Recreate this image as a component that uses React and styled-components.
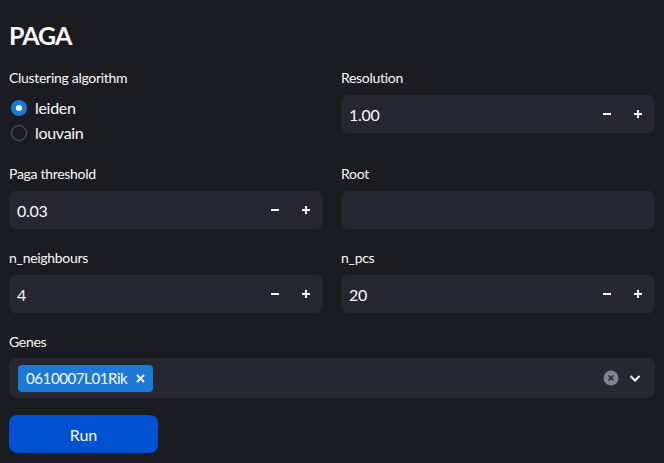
import React from 'react';
import styled, { createGlobalStyle } from 'styled-components';

const GlobalStyle = createGlobalStyle`
  html, body {
    margin: 0;
    padding: 0;
    background: #1b1c21;
  }
  body {
    font-family: 'Lato', 'Noto Sans', sans-serif;
    color: #fafafa;
  }
`;

const Page = styled.div`
  width: 664px;
  height: 463px;
  box-sizing: border-box;
  padding: 0 9px;
  background: #1b1c21;
  overflow: hidden;
`;

const Title = styled.h2`
  margin: 0;
  padding-top: 18px;
  height: 68px;
  box-sizing: border-box;
  font-size: 25px;
  font-weight: 700;
  letter-spacing: -1px;
  line-height: 34px;
  color: #fafafa;
`;

const Grid = styled.div`
  display: grid;
  grid-template-columns: minmax(0, 1fr) minmax(0, 1fr);
  column-gap: 18px;
  row-gap: 19px;
`;

const Field = styled.div`
  display: flex;
  flex-direction: column;
  min-width: 0;
  grid-column: ${p => (p.$wide ? '1 / -1' : 'auto')};
`;

const Label = styled.label`
  font-size: 14px;
  letter-spacing: -0.3px;
  line-height: 20px;
  height: 20px;
  margin-bottom: ${p => p.$gap || 7}px;
  color: #fafafa;
`;

const RadioGroup = styled.div`
  display: flex;
  flex-direction: column;
`;

const RadioRow = styled.div`
  display: flex;
  align-items: center;
  height: 25px;
  gap: 8px;
  padding-left: 2px;
  font-size: 16px;
  letter-spacing: -0.3px;
  color: #fafafa;
`;

const RadioDot = styled.span`
  position: relative;
  width: 16px;
  height: 16px;
  box-sizing: border-box;
  border-radius: 50%;
  flex-shrink: 0;
  background: ${p => (p.$on ? '#1c7ad6' : 'transparent')};
  border: ${p => (p.$on ? 'none' : '1.5px solid #5e606a')};
  &::after {
    content: '';
    display: ${p => (p.$on ? 'block' : 'none')};
    position: absolute;
    left: 50%;
    top: 50%;
    width: 6px;
    height: 6px;
    margin: -3px 0 0 -3px;
    border-radius: 50%;
    background: #fff;
  }
`;

const InputBox = styled.div`
  height: ${p => p.$h || 38}px;
  background: #262730;
  border-radius: 8px;
  display: flex;
  align-items: center;
  padding-left: ${p => p.$pl || 8}px;
  padding-right: ${p => p.$pr || 2}px;
  box-sizing: border-box;
  font-size: 16px;
  letter-spacing: -0.3px;
  color: #fafafa;
`;

const Value = styled.span`
  flex: 1;
`;

const StepBtn = styled.span`
  width: 31px;
  height: 100%;
  display: flex;
  align-items: center;
  justify-content: center;
`;

const Tag = styled.span`
  display: inline-flex;
  align-items: center;
  height: 27px;
  padding: 0 8px;
  gap: 9px;
  background: #1c7ad6;
  border-radius: 4px;
  font-size: 15px;
  letter-spacing: -0.4px;
  color: #fafafa;
`;

const Spacer = styled.span`
  flex: 1;
`;

const IconSlot = styled.span`
  width: 24px;
  display: flex;
  align-items: center;
  justify-content: center;
`;

const RunButton = styled.button`
  display: block;
  margin-top: 17px;
  width: 149px;
  height: 38px;
  border: none;
  border-radius: 8px;
  background: #0051d0;
  color: #fafafa;
  font-family: inherit;
  font-size: 16px;
`;

const Minus = () => (
  <svg width="10" height="10" viewBox="0 0 10 10">
    <path d="M1 5h8" stroke="#fafafa" strokeWidth="2" />
  </svg>
);

const Plus = () => (
  <svg width="10" height="10" viewBox="0 0 10 10">
    <path d="M1 5h8M5 1v8" stroke="#fafafa" strokeWidth="2" />
  </svg>
);

const NumberInput = ({ value }) => (
  <InputBox>
    <Value>{value}</Value>
    <StepBtn><Minus /></StepBtn>
    <StepBtn><Plus /></StepBtn>
  </InputBox>
);

export default function App() {
  return (
    <Page>
      <GlobalStyle />
      <Title>PAGA</Title>
      <Grid>
        <Field>
          <Label>Clustering algorithm</Label>
          <RadioGroup>
            <RadioRow><RadioDot $on />leiden</RadioRow>
            <RadioRow><RadioDot />louvain</RadioRow>
          </RadioGroup>
        </Field>
        <Field>
          <Label>Resolution</Label>
          <NumberInput value="1.00" />
        </Field>
        <Field>
          <Label>Paga threshold</Label>
          <NumberInput value="0.03" />
        </Field>
        <Field>
          <Label>Root</Label>
          <InputBox />
        </Field>
        <Field>
          <Label>n_neighbours</Label>
          <NumberInput value="4" />
        </Field>
        <Field>
          <Label>n_pcs</Label>
          <NumberInput value="20" />
        </Field>
        <Field $wide>
          <Label $gap={6}>Genes</Label>
          <InputBox $h={40} $pl={9} $pr={8}>
            <Tag>
              0610007L01Rik
              <svg width="9" height="9" viewBox="0 0 9 9">
                <path d="M1 1l7 7M8 1l-7 7" stroke="#fafafa" strokeWidth="1.8" />
              </svg>
            </Tag>
            <Spacer />
            <IconSlot>
              <svg width="16" height="16" viewBox="0 0 16 16">
                <circle cx="8" cy="8" r="7.5" fill="#80838f" />
                <path d="M5.5 5.5l5 5M10.5 5.5l-5 5" stroke="#262730" strokeWidth="1.6" />
              </svg>
            </IconSlot>
            <IconSlot>
              <svg width="14" height="14" viewBox="0 0 14 14">
                <path d="M2.5 5l4.5 4.5L11.5 5" stroke="#fafafa" strokeWidth="2" fill="none" />
              </svg>
            </IconSlot>
          </InputBox>
        </Field>
      </Grid>
      <RunButton>Run</RunButton>
    </Page>
  );
}
